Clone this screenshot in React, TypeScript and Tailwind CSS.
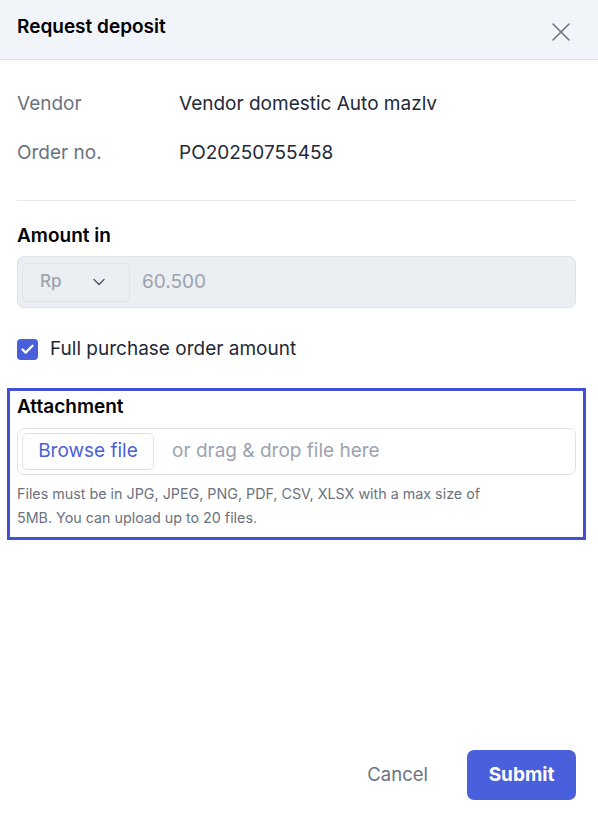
import { Check, ChevronDown } from 'lucide-react';

const font = { fontFamily: 'Inter, "Noto Sans", sans-serif' };

export default function App() {
  return (
    <div className="flex h-[818px] w-[598px] flex-col bg-white text-[#111827]" style={font}>
      {/* Header */}
      <div className="flex h-[60px] items-start justify-between border-b border-[#dde1e8] bg-[#f1f4f9] pl-[17px] pr-[28px] pt-[15px]">
        <h2 className="text-[19px] font-semibold leading-[24px] text-black">Request deposit</h2>
        <svg className="mt-[8px] h-[18px] w-[18px] text-[#6b7280]" viewBox="0 0 18 18" fill="none" stroke="currentColor" strokeWidth={1.6} strokeLinecap="round">
          <path d="M1 1L17 17M17 1L1 17" />
        </svg>
      </div>

      <div className="pl-[17px] pr-[22px]">
        {/* Details */}
        <div className="flex flex-col gap-[27px] pt-[33px] pb-[36px] text-[19px]">
          <div className="flex h-[22px] items-center">
            <span className="w-[162px] text-[#6b7280]">Vendor</span>
            <span className="text-[#1f2937]">Vendor domestic Auto mazlv</span>
          </div>
          <div className="flex h-[22px] items-center">
            <span className="w-[162px] text-[#6b7280]">Order no.</span>
            <span className="text-[#1f2937]">PO20250755458</span>
          </div>
        </div>
        <div className="border-t border-[#e5e7eb]" />

        {/* Amount */}
        <div className="pt-[23px] text-[19px] font-semibold leading-[24px] text-black">Amount in</div>
        <div className="mt-[8px] flex h-[52px] items-center rounded-[7px] border border-[#dfe3e8] bg-[#ebeef2] pl-[4px]">
          <div className="flex h-[39px] w-[108px] items-center justify-between rounded-[5px] border border-[#dfe3e8] pl-[17px] pr-[20px]">
            <span className="text-[17px] font-medium text-[#9ca3af]">Rp</span>
            <ChevronDown className="h-[20px] w-[20px] text-[#4b5563]" strokeWidth={1.6} />
          </div>
          <span className="ml-[12px] text-[19px] text-[#9ca3af]">60.500</span>
        </div>

        {/* Checkbox */}
        <label className="mt-[29px] flex h-[24px] items-center gap-[12px]">
          <span className="flex h-[21px] w-[21px] items-center justify-center rounded-[4px] bg-[#4a5fdb]">
            <Check className="h-[15px] w-[15px] text-white" strokeWidth={3.5} />
          </span>
          <span className="text-[19px] leading-[24px] text-[#1f2937]">Full purchase order amount</span>
        </label>
      </div>

      {/* Attachment (focused) */}
      <div className="ml-[7px] mr-[12px] mt-[27px] border-[3px] border-[#4350d4] px-[7px] pb-[7px] pt-[4px]">
        <div className="text-[19px] font-semibold leading-[24px] text-black">Attachment</div>
        <div className="mt-[9px] flex h-[47px] items-center rounded-[7px] border border-[#dfe3e8] pl-[4px]">
          <div className="flex h-[37px] w-[132px] items-center justify-center rounded-[5px] border border-[#dfe3e8] text-[19px] text-[#4a5fdb]">
            Browse file
          </div>
          <span className="ml-[18px] text-[19px] text-[#9ca3af]">or drag &amp; drop file here</span>
        </div>
        <p className="mt-[7px] max-w-[470px] text-[14.3px] leading-[24px] text-[#6b7280]">
          Files must be in JPG, JPEG, PNG, PDF, CSV, XLSX with a max size of 5MB. You can upload up to 20 files.
        </p>
      </div>

      {/* Footer */}
      <div className="mt-auto flex items-center justify-end gap-[39px] pb-[18px] pr-[22px]">
        <button className="text-[18.5px] text-[#6b7280]">Cancel</button>
        <button className="h-[50px] w-[109px] rounded-[7px] bg-[#4a5fdb] text-[19px] font-bold text-white">
          Submit
        </button>
      </div>
    </div>
  );
}
